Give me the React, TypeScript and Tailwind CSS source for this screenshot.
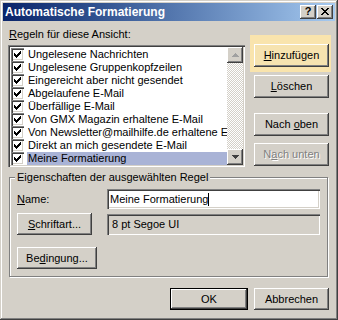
import type { ReactNode } from 'react';

const raised =
  'shadow-[inset_-1px_-1px_0_#404040,inset_1px_1px_0_#ffffff,inset_-2px_-2px_0_#808080]';
const sunken =
  'shadow-[inset_1px_1px_0_#808080,inset_2px_2px_0_#404040,inset_-1px_-1px_0_#ffffff,inset_-2px_-2px_0_#d4d0c8]';

const rules = [
  'Ungelesene Nachrichten',
  'Ungelesene Gruppenkopfzeilen',
  'Eingereicht aber nicht gesendet',
  'Abgelaufene E-Mail',
  'Überfällige E-Mail',
  'Von GMX Magazin erhaltene E-Mail',
  'Von Newsletter@mailhilfe.de erhaltene E-Mail',
  'Direkt an mich gesendete E-Mail',
  'Meine Formatierung',
];

function Btn({
  children,
  className = '',
  disabled = false,
}: {
  children: ReactNode;
  className?: string;
  disabled?: boolean;
}) {
  return (
    <div
      className={`flex items-center justify-center ${raised} ${
        disabled ? 'text-[#808080] [text-shadow:1px_1px_0_#ffffff]' : 'text-black'
      } ${className}`}
    >
      {children}
    </div>
  );
}

function Check() {
  return (
    <svg width="7" height="7" viewBox="0 0 7 7" shapeRendering="crispEdges">
      <path
        d="M0 2h1v1h1v1h1v-1h1v-1h1v-1h1v-1h1v3h-1v1h-1v1h-1v1h-1v1h-1v-1h-1v-1h-1z"
        fill="#000"
      />
    </svg>
  );
}

function Arrow({ up, color }: { up?: boolean; color: string }) {
  return (
    <svg width="7" height="4" viewBox="0 0 7 4" shapeRendering="crispEdges">
      <path d={up ? 'M3 0h1v1h1v1h1v1h1v1h-7v-1h1v-1h1v-1h1z' : 'M0 0h7v1h-1v1h-1v1h-1v1h-1v-1h-1v-1h-1v-1h-1z'} fill={color} />
    </svg>
  );
}

export default function App() {
  return (
    <div
      className="w-[338px] h-[320px] bg-[#d4d0c8] p-[3px] flex flex-col text-[11px] leading-[13px] text-black shadow-[inset_-1px_-1px_0_#404040,inset_1px_1px_0_#d4d0c8,inset_-2px_-2px_0_#808080,inset_2px_2px_0_#ffffff]"
      style={{ fontFamily: '"Liberation Sans", Arial, sans-serif' }}
    >
      {/* Title bar */}
      <div className="h-[18px] flex items-center justify-between pl-[2px] pr-[2px] bg-linear-to-r from-[#0a246a] to-[#a6caf0]">
        <span className="text-white font-bold text-[12px] leading-[14px]">Automatische Formatierung</span>
        <div className="flex gap-[1px]">
          <div className={`w-[16px] h-[14px] bg-[#d4d0c8] ${raised} flex items-center justify-center font-bold text-[11px] leading-none pb-[1px]`}>
            ?
          </div>
          <div className={`w-[16px] h-[14px] bg-[#d4d0c8] ${raised} flex items-center justify-center pb-[1px]`}>
            <svg width="8" height="7" viewBox="0 0 8 7" shapeRendering="crispEdges">
              <path d="M0 0h2v1h1v1h2v-1h1v-1h2v1h-1v1h-1v1h-1v1h1v1h1v1h1v1h-2v-1h-1v-1h-2v1h-1v1h-2v-1h1v-1h1v-1h1v-1h-1v-1h-1v-1h-1z" fill="#000" />
            </svg>
          </div>
        </div>
      </div>

      {/* Rules + side buttons */}
      <div className="flex">
        <div className="ml-[5px] flex flex-col">
          <div className="mt-[7px] ml-[1px] h-[13px]">
            <u>R</u>egeln für diese Ansicht:
          </div>
          <div className={`mt-[4px] w-[237px] h-[122px] bg-white p-[2px] flex ${sunken}`}>
            <div className="flex-1 flex flex-col min-w-0 pt-[1px]">
              {rules.map((r, i) => (
                <div key={r} className="h-[13px] flex items-center">
                  <div className={`ml-[1px] w-[13px] h-[13px] shrink-0 bg-white flex items-center justify-center ${sunken}`}>
                    <Check />
                  </div>
                  <div
                    className={`ml-[3px] flex-1 h-[13px] px-[1px] whitespace-nowrap overflow-hidden ${
                      i === rules.length - 1 ? 'bg-[#a9b3d6]' : ''
                    }`}
                  >
                    {r}
                  </div>
                </div>
              ))}
            </div>
            <div className="w-[16px] flex flex-col">
              <div className={`h-[16px] bg-[#d4d0c8] ${raised} flex items-center justify-center`}>
                <Arrow up color="#a0a0a0" />
              </div>
              <div className="flex-1 bg-[repeating-conic-gradient(#d4d0c8_0_25%,#ffffff_0_50%)] bg-[length:2px_2px]" />
              <div className={`h-[16px] bg-[#d4d0c8] ${raised} flex items-center justify-center`}>
                <Arrow color="#404040" />
              </div>
            </div>
          </div>
        </div>

        <div className="ml-[5px] flex flex-col">
          <div className="mt-[14px] w-[81px] h-[37px] bg-[#f9e4ad] pt-[9px] pl-[4px]">
            <Btn className="w-[75px] h-[23px] bg-[#f6e3b0]">
              <span>
                <u>H</u>inzufügen
              </span>
            </Btn>
          </div>
          <Btn className="mt-[3px] ml-[4px] w-[75px] h-[23px]">
            <span>
              <u>L</u>öschen
            </span>
          </Btn>
          <Btn className="mt-[15px] ml-[4px] w-[75px] h-[23px]">
            <span>
              Nach <u>o</u>ben
            </span>
          </Btn>
          <Btn disabled className="mt-[7px] ml-[4px] w-[75px] h-[23px]">
            <span>
              N<u>a</u>ch unten
            </span>
          </Btn>
        </div>
      </div>

      {/* Group box */}
      <div className="relative mt-[10px] ml-[6px] mr-[7px] h-[100px] border border-[#808080] shadow-[1px_1px_0_#ffffff,inset_1px_1px_0_#ffffff] pl-[7px] pr-[7px] pt-[11px]">
        <span className="absolute -top-[7px] left-[5px] bg-[#d4d0c8] px-[2px]">
          Eigenschaften der ausgewählten Regel
        </span>
        <div className="flex items-center h-[20px]">
          <div className="w-[90px]">
            <u>N</u>ame:
          </div>
          <div className={`flex-1 h-[20px] bg-white ${sunken} flex items-center pl-[3px]`}>
            Meine Formatierung
            <span className="inline-block w-[1px] h-[13px] bg-black" />
          </div>
        </div>
        <div className="flex items-center mt-[4px]">
          <Btn className="w-[75px] h-[22px]">
            <span>
              <u>S</u>chriftart...
            </span>
          </Btn>
          <div className={`ml-[15px] flex-1 h-[21px] ${sunken} flex items-center pl-[5px]`}>8 pt Segoe UI</div>
        </div>
        <Btn className="mt-[12px] w-[80px] h-[22px]">
          <span>
            Be<u>d</u>ingung...
          </span>
        </Btn>
      </div>

      {/* Bottom buttons */}
      <div className="mt-[11px] mr-[6px] flex justify-end gap-[6px]">
        <div className="border border-black">
          <Btn className="w-[76px] h-[20px]">OK</Btn>
        </div>
        <Btn className="w-[75px] h-[22px]">Abbrechen</Btn>
      </div>
    </div>
  );
}
